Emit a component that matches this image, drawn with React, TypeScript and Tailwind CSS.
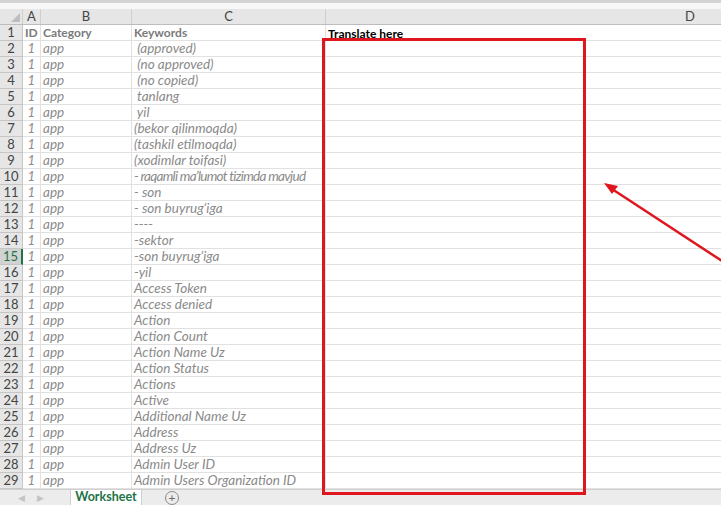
import React from "react";

const rows: string[] = [
  " (approved)",
  " (no approved)",
  " (no copied)",
  " tanlang",
  " yil",
  "(bekor qilinmoqda)",
  "(tashkil etilmoqda)",
  "(xodimlar toifasi)",
  "- raqamli ma’lumot tizimda mavjud",
  "- son",
  "- son buyrug‘iga",
  "----",
  "-sektor",
  "-son buyrug‘iga",
  "-yil",
  "Access Token",
  "Access denied",
  "Action",
  "Action Count",
  "Action Name Uz",
  "Action Status",
  "Actions",
  "Active",
  "Additional Name Uz",
  "Address",
  "Address Uz",
  "Admin User ID",
  "Admin Users Organization ID",
];

const cols = "grid grid-cols-[23px_18px_91px_194px_1fr]";

export default function App() {
  return (
    <div
      className="relative w-[721px] h-[505px] overflow-hidden bg-white flex flex-col text-[12px] leading-none"
      style={{ fontFamily: "Lato, 'Liberation Sans', Arial, sans-serif" }}
    >
      {/* top strip */}
      <div className="h-[9px] shrink-0 border-t-[3px] border-[#d4d4d4] bg-[#f7f7f7]" />

      {/* column letters */}
      <div className={`${cols} h-[16px] shrink-0 bg-[#e6e6e6] border-b border-[#bdbdbd] text-[#444] text-[13px]`}>
        <div className="relative border-r border-[#cfcfcf]">
          <div className="absolute right-[2px] bottom-[2px] w-0 h-0 border-l-[9px] border-l-transparent border-b-[9px] border-b-[#bdbdbd]" />
        </div>
        <div className="flex items-center justify-center border-r border-[#cfcfcf]">A</div>
        <div className="flex items-center justify-center border-r border-[#cfcfcf]">B</div>
        <div className="flex items-center justify-center border-r border-[#cfcfcf]">C</div>
        <div className="flex items-center pl-[359px]">D</div>
      </div>

      {/* row 1 */}
      <div className={`${cols} h-[16px] shrink-0`}>
        <div className="flex items-center justify-center bg-[#e6e6e6] border-r border-b border-[#c6c6c6] text-[#444] text-[13px]">1</div>
        <div className="flex items-center pl-[2px] border-r border-b border-[#e1e1e1] font-bold text-[#7a7a7a] text-[12px]">ID</div>
        <div className="flex items-center pl-[2px] border-r border-b border-[#e1e1e1] font-bold text-[#7a7a7a] text-[12px]">Category</div>
        <div className="flex items-center pl-[2px] border-r border-b border-[#e1e1e1] font-bold text-[#7a7a7a] text-[12px]">Keywords</div>
        <div className="flex items-end pl-[2px] border-b border-[#e1e1e1] font-bold text-black text-[12px]">Translate here</div>
      </div>

      {rows.map((kw, i) => {
        const n = i + 2;
        const selected = n === 15;
        return (
          <div key={n} className={`${cols} h-[16px] shrink-0`}>
            <div
              className={`flex items-center justify-center border-b border-[#c6c6c6] text-[13px] ${
                selected ? "bg-[#d2d2d2] border-r-2 border-r-[#217346] text-[#217346]" : "bg-[#e6e6e6] border-r text-[#444]"
              }`}
            >
              {n}
            </div>
            <div className="flex items-center justify-end pr-[5px] border-r border-b border-[#e1e1e1] italic text-[#8a8a8a] text-[13px]">1</div>
            <div className="flex items-center pl-[2px] border-r border-b border-[#e1e1e1] italic text-[#8a8a8a] text-[13.5px]">app</div>
            <div
              className={`flex items-center pl-[2px] border-r border-b border-[#e1e1e1] italic text-[#8a8a8a] text-[13.5px] whitespace-pre ${
                n === 10 ? "tracking-[-0.7px]" : ""
              }`}
            >
              {kw}
            </div>
            <div className="border-b border-[#e1e1e1]" />
          </div>
        );
      })}

      {/* sheet tabs */}
      <div className="flex-1 flex items-stretch bg-[#ececec] border-t border-[#cfcfcf]">
        <div className="w-[70px] flex items-center gap-[12px] pl-[18px] text-[#c4c4c4] text-[9px]">
          <span>◀</span>
          <span>▶</span>
        </div>
        <div className="w-[72px] bg-white flex items-center justify-center font-bold text-[#217346] text-[12.5px] border-x border-[#cfcfcf]">
          Worksheet
        </div>
        <div className="flex items-center pl-[23px]">
          <div className="w-[14px] h-[14px] rounded-full border border-[#8a8a8a] flex items-center justify-center text-[#6a6a6a] text-[12px]">
            +
          </div>
        </div>
      </div>

      {/* red annotation */}
      <svg className="absolute left-0 top-0 pointer-events-none" width="721" height="505">
        <rect x="323.5" y="39.5" width="261" height="454" fill="none" stroke="#e0161e" strokeWidth="3" />
        <line x1="722" y1="261" x2="612" y2="189" stroke="#e0161e" strokeWidth="2.5" />
        <polygon points="604,183 618,186 612,194" fill="#e0161e" />
      </svg>
    </div>
  );
}
